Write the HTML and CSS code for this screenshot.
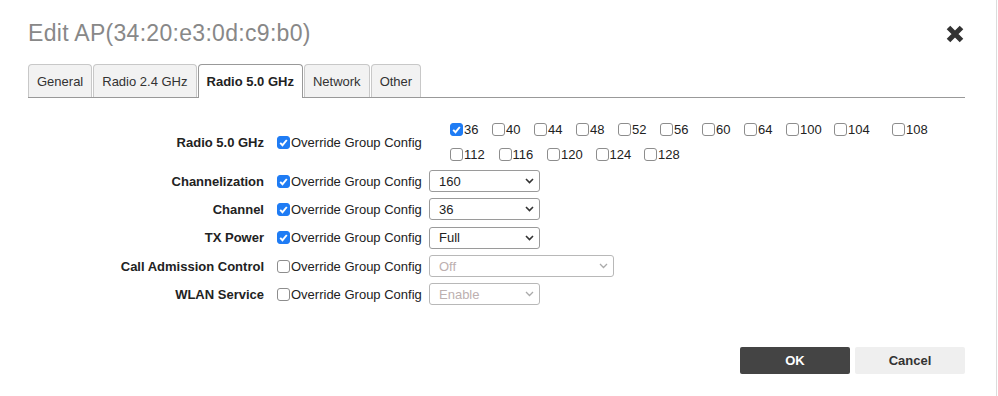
FILE: index.html
```html
<!DOCTYPE html>
<html>
<head>
<meta charset="utf-8">
<link rel="stylesheet" href="styles.css">
</head>
<body>
<div class="page">
  <div class="header">
    <h1 class="title">Edit AP(34:20:e3:0d:c9:b0)</h1>
    <svg class="close" width="18" height="18" viewBox="0 0 18 18"><path d="M2.5 2.5L15.5 15.5M15.5 2.5L2.5 15.5" stroke="#333" stroke-width="5" fill="none"/></svg>
  </div>
  <div class="tabs">
    <div class="tab">General</div>
    <div class="tab">Radio 2.4 GHz</div>
    <div class="tab active">Radio 5.0 GHz</div>
    <div class="tab">Network</div>
    <div class="tab">Other</div>
  </div>
  <div class="form">
    <div class="row first">
      <div class="lbl">Radio 5.0 GHz</div>
      <div class="ovr"><span class="cb on"><svg viewBox="0 0 13 13"><path d="M3.2 6.8l2.3 2.4 4.3-5.2" fill="none" stroke="#fff" stroke-width="1.9"/></svg></span>Override Group Config</div>
      <div class="channels">
        <div class="chline">
          <span class="ch"><span class="cb on"><svg viewBox="0 0 13 13"><path d="M3.2 6.8l2.3 2.4 4.3-5.2" fill="none" stroke="#fff" stroke-width="1.9"/></svg></span>36</span>
          <span class="ch"><span class="cb"></span>40</span>
          <span class="ch"><span class="cb"></span>44</span>
          <span class="ch"><span class="cb"></span>48</span>
          <span class="ch"><span class="cb"></span>52</span>
          <span class="ch"><span class="cb"></span>56</span>
          <span class="ch"><span class="cb"></span>60</span>
          <span class="ch"><span class="cb"></span>64</span>
          <span class="ch w3"><span class="cb"></span>100</span>
          <span class="ch wide"><span class="cb"></span>104</span>
          <span class="ch w3"><span class="cb"></span>108</span>
        </div>
        <div class="chline">
          <span class="ch w3b"><span class="cb"></span>112</span>
          <span class="ch w3b"><span class="cb"></span>116</span>
          <span class="ch w3b"><span class="cb"></span>120</span>
          <span class="ch w3b"><span class="cb"></span>124</span>
          <span class="ch w3b"><span class="cb"></span>128</span>
        </div>
      </div>
    </div>
    <div class="row">
      <div class="lbl">Channelization</div>
      <div class="ovr"><span class="cb on"><svg viewBox="0 0 13 13"><path d="M3.2 6.8l2.3 2.4 4.3-5.2" fill="none" stroke="#fff" stroke-width="1.9"/></svg></span>Override Group Config</div>
      <div class="select"><span>160</span><svg class="chev" width="9" height="6" viewBox="0 0 9 6"><path d="M1 1l3.5 3.5L8 1" fill="none" stroke="currentColor" stroke-width="1.6"/></svg></div>
    </div>
    <div class="row">
      <div class="lbl">Channel</div>
      <div class="ovr"><span class="cb on"><svg viewBox="0 0 13 13"><path d="M3.2 6.8l2.3 2.4 4.3-5.2" fill="none" stroke="#fff" stroke-width="1.9"/></svg></span>Override Group Config</div>
      <div class="select"><span>36</span><svg class="chev" width="9" height="6" viewBox="0 0 9 6"><path d="M1 1l3.5 3.5L8 1" fill="none" stroke="currentColor" stroke-width="1.6"/></svg></div>
    </div>
    <div class="row">
      <div class="lbl">TX Power</div>
      <div class="ovr"><span class="cb on"><svg viewBox="0 0 13 13"><path d="M3.2 6.8l2.3 2.4 4.3-5.2" fill="none" stroke="#fff" stroke-width="1.9"/></svg></span>Override Group Config</div>
      <div class="select"><span>Full</span><svg class="chev" width="9" height="6" viewBox="0 0 9 6"><path d="M1 1l3.5 3.5L8 1" fill="none" stroke="currentColor" stroke-width="1.6"/></svg></div>
    </div>
    <div class="row">
      <div class="lbl">Call Admission Control</div>
      <div class="ovr"><span class="cb"></span>Override Group Config</div>
      <div class="select disabled long"><span>Off</span><svg class="chev" width="9" height="6" viewBox="0 0 9 6"><path d="M1 1l3.5 3.5L8 1" fill="none" stroke="currentColor" stroke-width="1.3"/></svg></div>
    </div>
    <div class="row">
      <div class="lbl">WLAN Service</div>
      <div class="ovr"><span class="cb"></span>Override Group Config</div>
      <div class="select disabled"><span>Enable</span><svg class="chev" width="9" height="6" viewBox="0 0 9 6"><path d="M1 1l3.5 3.5L8 1" fill="none" stroke="currentColor" stroke-width="1.3"/></svg></div>
    </div>
  </div>
  <div class="buttons">
    <button class="btn ok">OK</button>
    <button class="btn cancel">Cancel</button>
  </div>
</div>
</body>
</html>
```
FILE: styles.css
```css
html, body {
  margin: 0;
  padding: 0;
  background: #fff;
}
body {
  font-family: "Liberation Sans", Arial, Helvetica, sans-serif;
  font-size: 13px;
  color: #222;
}
.page {
  box-sizing: border-box;
  width: 997px;
  height: 396px;
  border-right: 1px solid #dcdcdc;
  padding: 20px 31px 0 28px;
}
.header {
  display: flex;
  justify-content: space-between;
  align-items: center;
  height: 26px;
  margin-bottom: 18px;
}
.title {
  margin: 0;
  font-weight: normal;
  font-size: 23px;
  letter-spacing: 0.3px;
  line-height: 26px;
  color: #888;
}
.close {
  display: block;
  margin-top: 2px;
  margin-right: 1px;
}
.tabs {
  display: flex;
  align-items: flex-end;
  border-bottom: 1px solid #999;
  height: 33px;
}
.tab {
  box-sizing: border-box;
  height: 33px;
  line-height: 33px;
  padding: 0 8px;
  margin-right: 1px;
  border: 1px solid #c8c8c8;
  border-bottom: 0;
  border-radius: 4px 4px 0 0;
  background: #f2f2f2;
  color: #333;
}
.tab.active {
  height: 34px;
  margin-bottom: -1px;
  background: #fff;
  border-color: #999;
  font-weight: bold;
  color: #222;
}
.form {
  margin-top: 19px;
  display: flex;
  flex-direction: column;
}
.row {
  display: flex;
  align-items: center;
  height: 28.3px;
}
.row.first {
  height: 50px;
}
.lbl {
  width: 236px;
  margin-right: 13px;
  text-align: right;
  font-weight: bold;
  color: #222;
}
.ovr {
  width: 152px;
  display: flex;
  align-items: center;
  color: #222;
}
.cb {
  box-sizing: border-box;
  width: 13px;
  height: 13px;
  border: 1px solid #8d8d8d;
  border-radius: 3px;
  background: #fff;
  margin-right: 1px;
  flex: none;
  display: inline-block;
}
.cb.on {
  background: #1f7cf4;
  border-color: #1f7cf4;
}
.cb.on svg {
  display: block;
  width: 13px;
  height: 13px;
  margin: -1px;
}
.channels {
  padding-left: 21px;
}
.chline {
  display: flex;
  align-items: center;
  height: 25px;
}
.ch {
  display: flex;
  align-items: center;
  width: 42px;
  flex: none;
}
.ch.w3 {
  width: 48px;
}
.ch.w3b {
  width: 48.5px;
}
.ch.wide {
  width: 58px;
}
.select {
  box-sizing: border-box;
  width: 111px;
  height: 22px;
  border: 1px solid #9a9a9a;
  border-radius: 3px;
  display: flex;
  align-items: center;
  justify-content: space-between;
  padding: 0 5px 0 9px;
  color: #222;
  background: #fff;
}
.select.long {
  width: 185px;
}
.select.disabled {
  border-color: #b8b8b8;
  color: #bdb0b0;
}
.select.disabled .chev {
  color: #aaa;
}
.chev {
  color: #333;
  display: block;
}
.buttons {
  display: flex;
  justify-content: flex-end;
  gap: 5px;
  margin-top: 39px;
}
.btn {
  width: 110px;
  height: 27px;
  border: 0;
  border-radius: 2px;
  font-family: "Liberation Sans", Arial, Helvetica, sans-serif;
  font-size: 13px;
  font-weight: bold;
  padding: 0;
}
.btn.ok {
  background: #444;
  color: #fff;
}
.btn.cancel {
  background: #efefef;
  color: #333;
}
```
